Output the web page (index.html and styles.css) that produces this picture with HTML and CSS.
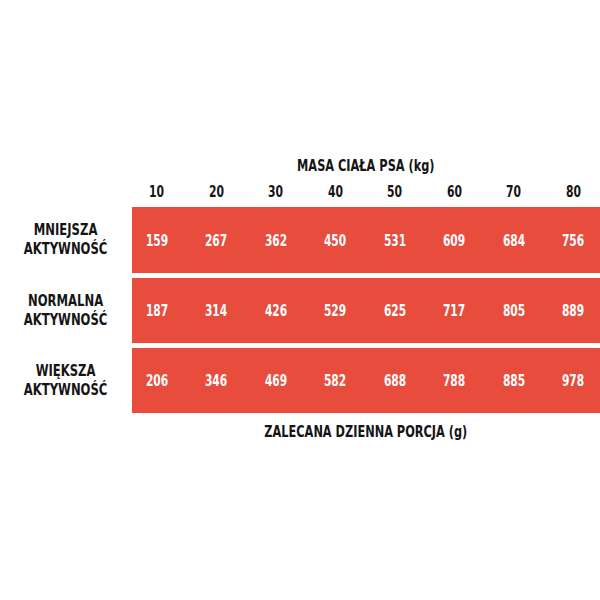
FILE: index.html
```html
<!DOCTYPE html>
<html lang="pl">
<head>
<meta charset="utf-8">
<link rel="stylesheet" href="styles.css">
</head>
<body>
<div class="chart">
  <div class="title"><span>MASA CIAŁA PSA (kg)</span></div>
  <div class="row head">
    <div class="label"></div>
    <div class="cells">
      <span>10</span><span>20</span><span>30</span><span>40</span><span>50</span><span>60</span><span>70</span><span>80</span>
    </div>
  </div>
  <div class="row data r1">
    <div class="label"><span>MNIEJSZA<br>AKTYWNOŚĆ</span></div>
    <div class="bar"><div class="cells">
      <span>159</span><span>267</span><span>362</span><span>450</span><span>531</span><span>609</span><span>684</span><span>756</span>
    </div></div>
  </div>
  <div class="row data">
    <div class="label"><span>NORMALNA<br>AKTYWNOŚĆ</span></div>
    <div class="bar"><div class="cells">
      <span>187</span><span>314</span><span>426</span><span>529</span><span>625</span><span>717</span><span>805</span><span>889</span>
    </div></div>
  </div>
  <div class="row data">
    <div class="label"><span>WIĘKSZA<br>AKTYWNOŚĆ</span></div>
    <div class="bar"><div class="cells">
      <span>206</span><span>346</span><span>469</span><span>582</span><span>688</span><span>788</span><span>885</span><span>978</span>
    </div></div>
  </div>
  <div class="title foot"><span>ZALECANA DZIENNA PORCJA (g)</span></div>
</div>
</body>
</html>
```

FILE: styles.css
```css
html, body {
  margin: 0;
  padding: 0;
  background: #ffffff;
}
body {
  width: 600px;
  height: 600px;
  overflow: hidden;
  font-family: "DejaVu Sans Condensed", "DejaVu Sans", sans-serif;
  font-weight: bold;
  color: #151515;
}
.chart {
  padding-top: 156px;
  display: flex;
  flex-direction: column;
}
.title {
  margin-left: 132px;
  text-align: center;
  font-size: 15px;
  line-height: 20px;
}
.title span {
  display: inline-block;
  transform: scaleX(0.84);
  white-space: nowrap;
}
.row {
  display: flex;
}
.label {
  width: 132px;
  flex: none;
  text-align: center;
  font-size: 15px;
  line-height: 19px;
  display: flex;
  align-items: center;
  justify-content: center;
}
.label span {
  display: inline-block;
  transform: scaleX(0.86);
}
.head {
  margin-top: 6px;
  height: 20px;
  font-size: 15px;
  line-height: 20px;
}
.cells {
  display: grid;
  grid-template-columns: repeat(8, 59.5px);
  margin-left: -5px;
  height: 100%;
  align-items: center;
  justify-items: center;
}
.cells span {
  display: inline-block;
  transform: scaleX(0.8);
}
.data {
  height: 65px;
  margin-top: 5px;
}
.data.r1 {
  height: 66px;
}
.bar {
  flex: 1;
  background: #e84c3d;
  color: #ffffff;
  font-size: 16px;
}
.bar .cells span {
  transform: scaleX(0.74);
}
.foot {
  margin-top: 9px;
}
```
